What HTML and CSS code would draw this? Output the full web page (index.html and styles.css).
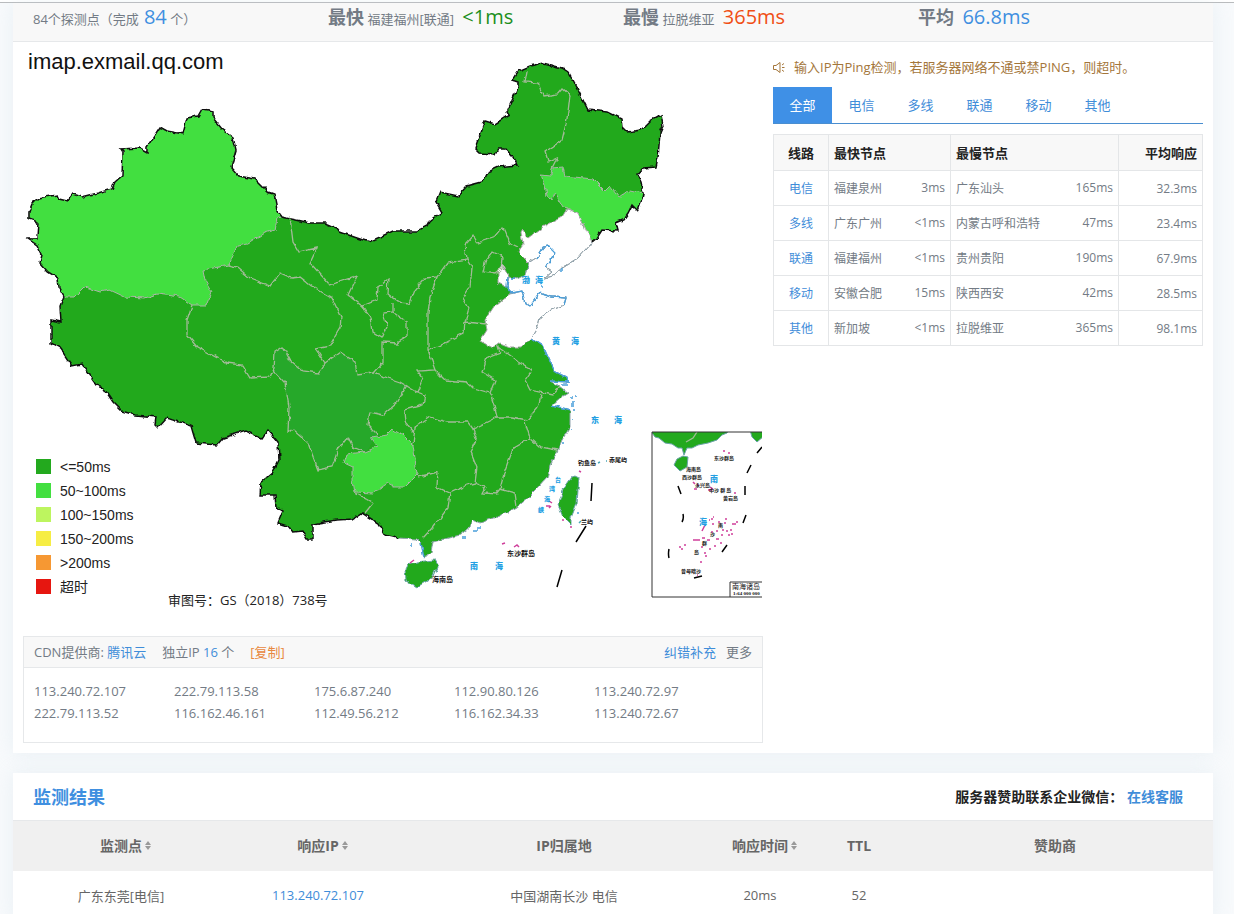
FILE: index.html
```
<!DOCTYPE html>
<html lang="zh-CN">

<head>
    <meta charset="UTF-8">
    <meta name="viewport" content="width=device-width, initial-scale=1.0">
    <title>imap.exmail.qq.com Ping检测</title>
    <link rel="stylesheet" href="styles.css">
</head>

<body>
    <div class="topline"></div>

    <main class="page">
        <section class="card">
            <div class="stats">
                <div>84个探测点（完成<span class="num blue">84</span> 个）</div>
                <div><strong>最快</strong> 福建福州[联通] <span class="num green">&lt;1ms</span></div>
                <div><strong>最慢</strong> 拉脱维亚 <span class="num red">365ms</span></div>
                <div><strong>平均</strong> <span class="num blue">66.8ms</span></div>
            </div>

            <div class="overview">
                <div class="left">
                    <svg class="map" viewBox="23 42 740 594" role="img" aria-label="中国响应时间地图">
                        <defs>
                            <filter id="rough" x="-5%" y="-5%" width="110%" height="110%">
                                <feTurbulence type="fractalNoise" baseFrequency="0.14" numOctaves="2" seed="4" />
                                <feDisplacementMap in="SourceGraphic" scale="5" xChannelSelector="R" yChannelSelector="G" />
                            </filter>
                            <clipPath id="insetClip"><rect x="652" y="432" width="110" height="165" /></clipPath>
                        </defs>

                        <g filter="url(#rough)">
                            <!-- 全国 -->
                            <path class="land" d="M64 297L59 288 58 278 48 272 40 263 42 255 37 245 28 239 37 239 38 222 29 219 29 212 32 204 38 198 57 195 59 199 67 201 72 194 82 197 98 193 112 189 115 182 122 176 123 152 121 149 140 148 147 152 147 147 160 127 167 131 183 134 187 118 198 116 202 109 213 111 213 118 222 129 233 137 236 150 231 168 238 176 255 179 268 192 274 194 277 210 282 217 310 223 325 223 337 228 340 232 357 238 369 242 393 231 417 231 427 226 430 220 442 212 436 202 440 192 458 196 467 186 482 182 487 172 498 167 518 165 513 157 505 148 498 148 495 154 480 153 475 148 485 121 495 124 509 115 507 112 518 87 518 82 512 80 518 71 530 66 543 63 562 68 568 72 578 90 588 110 608 112 622 119 623 128 627 132 641 130 650 121 661 115 663 126 660 133 658 157 656 167 643 168 637 175 641 183 643 193 641 203 638 211 632 205 628 213 623 220 615 223 617 231 602 230 597 238 592 242 587 232 578 213 567 209 562 217 543 227 528 238 523 229 521 232 523 245 518 252 529 263 525 275 517 279 508 277 507 287 512 293 531 338 543 346 548 357 555 372 567 378 568 382 550 381 560 387 568 393 560 398 552 405 570 410 570 427 562 440 557 452 550 465 547 478 538 488 528 498 517 507 500 516 480 523 473 520 470 527 460 535 433 542 431 553 424 557 421 543 417 539 397 538 385 535 378 523 362 513 353 519 337 520 318 523 313 524 313 539 307 539 303 532 293 533 287 526 278 523 283 511 276 507 275 495 259 495 260 483 273 472 279 460 278 442 268 430 262 439 245 431 223 438 217 445 196 443 191 426 167 418 158 428 155 425 156 417 135 415 122 411 113 402 103 387 97 385 82 364 72 366 60 348 51 343 51 320 61 322 60 307Z" />
                            <!-- 四川 -->
                            <path class="sichuan" d="M273 370L275 352 283 347 290 360 303 371 318 373 325 363 340 352 355 362 357 375 373 373 400 382 407 385 397 403 383 415 370 412 368 425 378 435 365 452 353 447 348 437 338 450 332 467 318 470 308 443 293 430 288 433 289 407 285 383Z" />
                            <!-- 新疆 -->
                            <path class="light" d="M64 297L59 288 58 278 48 272 40 263 42 255 37 245 28 239 37 239 38 222 29 219 29 212 32 204 38 198 57 195 59 199 67 201 72 194 82 197 98 193 112 189 115 182 122 176 123 152 121 149 140 148 147 152 147 147 160 127 167 131 183 134 187 118 198 116 202 109 213 111 213 118 222 129 233 137 236 150 231 168 238 176 255 179 268 192 274 194 277 210 282 217 277 218 275 230 265 233 248 244 237 246 229 265 203 270 205 280 212 292 207 305 192 305 180 297 157 294 145 298 125 297 110 290 100 292 85 287 75 297Z" />
                            <!-- 吉林 -->
                            <path class="light" d="M541 175L551 176 552 168 563 167 565 176 593 179 605 191 610 186 619 198 630 190 643 193 641 203 638 211 632 205 628 213 623 220 615 223 617 231 602 230 597 238 592 242 587 232 578 213 567 208 563 207 555 193 552 199 547 196 545 185Z" />
                            <!-- 贵州 -->
                            <path class="light" d="M393 429L403 435 413 445 415 458 417 475 405 487 395 487 388 483 373 493 355 492 353 480 353 467 344 463 347 454 365 452 377 447 371 438 387 435Z" />
                            <!-- 辽宁 天津 山东 -->
                            <path class="blank" d="M567 209L578 213 587 232 592 242 578 258 563 267 553 276 545 278 552 272 546 268 555 252 550 247 543 248 537 258 529 263 518 252 523 245 521 232 523 229 528 238 543 227 562 217Z" />
                            <path class="blank" d="M502 263L505 270 509 277 507 287 498 283 498 272Z" />
                            <path class="blank" d="M510 294L522 291 525 303 530 306 540 293 552 297 566 298 564 305 550 311 540 318 538 326 531 338 520 347 510 347 500 343 493 348 480 341 487 330 485 320 495 305 503 298Z" />
                            <!-- 省界 -->
                            <g class="border">
                                <path d="M192 305L187 320 187 335 197 347 227 363 242 365 250 378 270 377 274 368 275 352 283 347 290 360 303 371 318 373 325 363 315 348 330 345 340 328 341 317 332 298 313 287 300 277 292 278 280 273 270 286 250 278 237 267 229 265" />
                                <path d="M273 370L285 383 289 407 288 433 293 430 308 443 318 470 332 467 338 450 348 437 353 447 365 452" />
                                <path d="M290 218L293 242 299 252 317 248 310 263 330 285 357 276 348 295 362 306 377 300 378 287 388 278 387 293 398 302 410 303 415 290 425 278 437 277 447 263 467 260 465 245 473 236 477 243 495 237 503 227 510 243 518 247" />
                                <path d="M362 306L370 317 372 332 382 338 387 327 383 313 393 312 393 303M393 312L407 322 407 337 397 343 383 342 383 362 373 373" />
                                <path d="M325 363L340 352 355 362 357 375 373 373 400 382 417 392 423 378 418 371 435 370 428 350 428 313 430 297 437 277" />
                                <path d="M467 260L472 268 470 287 463 298 469 308 465 322 464 333 447 342 428 350M465 322L487 324" />
                                <path d="M435 370L445 380 467 382 473 388 490 393 495 380 482 372 487 358 500 353 498 347 518 362 532 370 525 380 530 390 553 395 560 387" />
                                <path d="M541 394L538 407 527 420 512 417 497 417 494 405 490 393M497 417L473 429 468 422 447 422 430 417 415 427 413 445" />
                                <path d="M407 385L397 403 383 415 370 412 368 425 378 435M417 392L425 395 423 405 404 410 405 422 414 432" />
                                <path d="M473 429L477 440 471 452 477 467 475 483 467 485 450 493 437 487 438 472 417 477M475 483L485 487 482 493 496 494 500 489 505 470 513 448 530 438 525 422M530 438L540 447 557 450M500 489L515 493 517 507" />
                                <path d="M450 493L448 508 433 527 422 539M355 493L373 503 365 513" />
                                <path d="M527 71L525 82 538 83 543 96 557 94 562 88 570 95 567 120 562 140 545 152 548 162 557 158 552 168" />
                                <path d="M493 252L503 257 502 268 495 274 483 272 485 262Z" />
                            </g>
                            <!-- 国界 -->
                            <path class="frontier" d="M592 242L597 238 602 230 617 231 615 223 623 220 628 213 632 205 638 211 641 203 643 193 641 183 637 175 643 168 656 167 658 157 660 133 663 126 661 115 650 121 641 130 627 132 623 128 622 119 608 112 588 110 578 90 568 72 562 68 543 63 530 66 518 71 512 80 518 82 518 87 507 112 509 115 495 124 485 121 475 148 480 153 495 154 498 148 505 148 513 157 518 165 498 167 487 172 482 182 467 186 458 196 440 192 436 202 442 212 430 220 427 226 417 231 393 231 369 242 357 238 340 232 337 228 325 223 310 223 282 217 277 210 274 194 268 192 255 179 238 176 231 168 236 150 233 137 222 129 213 118 213 111 202 109 198 116 187 118 183 134 167 131 160 127 147 147 147 152 140 148 121 149 123 152 122 176 115 182 112 189 98 193 82 197 72 194 67 201 59 199 57 195 38 198 32 204 29 212 29 219 38 222 37 239 28 239 37 245 42 255 40 263 48 272 58 278 59 288 64 297 60 307 61 322 51 320 51 343 60 348 72 366 82 364 97 385 103 387 113 402 122 411 135 415 156 417 155 425 158 428 167 418 191 426 196 443 217 445 223 438 245 431 262 439 268 430 278 442 279 460 273 472 260 483 259 495 275 495 276 507 283 511 278 523 287 526 293 533 303 532 307 539 313 539 313 524 318 523 337 520 353 519 362 513 378 523 385 535 397 538" />
                            <!-- 海岸线 -->
                            <path class="coast" d="M592 242L578 258 563 267 553 276 545 278 552 272 546 268 555 252 550 247 543 248 537 258 529 263 525 275 517 279 508 277 507 287 512 293 522 291 525 303 530 306 540 293 552 297 566 298 564 305 550 311 540 318 538 326 531 338 543 346 548 357 555 372 567 378 568 382 550 381 560 387 568 393 560 398 552 405 570 410 570 427 562 440 557 452 550 465 547 478 538 488 528 498 517 507 500 516 480 523 473 520 470 527 460 535 433 542 431 553 424 557 421 543 417 539 397 538" />
                            <path class="shore" d="M546 268L555 252 550 247 543 248 537 258M508 277L507 287 512 293 522 291 525 303 530 306 540 293 552 297 566 298 564 305M531 338L543 346 548 357 555 372 567 378 568 382 550 381M552 405L570 410M424 557L421 543" />
                            <path class="land coast-edge" d="M408 564L417 562 435 560 438 565 432 578 417 587 406 580 405 570Z" />
                            <path class="land coast-edge" d="M575 476L579 478 577 503 571 518 571 525 563 517 558 505 563 490 572 477Z" />
                            <g class="isles">
                                <path d="M571 398h2M576 396h2M572 402h3M571 406h4M573 410h3M571 404h3M566 382h3M561 385h6M560 272h2M566 273h1M560 270h2M541 286h1M572 420h1M571 430h1M562 443h2M473 530h5M477 528h5M461 537h5M410 545h2M577 513h2M511 278h4" />
                            </g>
                        </g>

                        <g class="reef">
                            <path d="M549 501l3 2M546 506h4M549 508l2-2M579 471l2 1M502 544l3-1M514 547l3-2 2 2M562 520h2M570 527h2M410 563l4-3" />
                            <path class="teal" d="M598 463l2-1M606 461h1M579 523l2-2" />
                        </g>
                        <path class="dash" d="M592 483L591 501M586 526L576 542M562 570L557 587" />

                        <g class="sea">
                            <text x="522" y="283">渤</text><text x="535" y="283">海</text>
                            <text x="552" y="344">黄</text><text x="571" y="344">海</text>
                            <text x="591" y="423">东</text><text x="614" y="423">海</text>
                            <text x="470" y="569">南</text><text x="495" y="569">海</text>
                            <text class="strait" x="555" y="482">台</text>
                            <text class="strait" x="549" y="491">湾</text>
                            <text class="strait" x="544" y="501">海</text>
                            <text class="strait" x="538" y="512">峡</text>
                        </g>
                        <g class="place">
                            <text x="578" y="465">钓鱼岛</text>
                            <text x="609" y="462">赤尾屿</text>
                            <text x="581" y="524">兰屿</text>
                            <text class="big" x="507" y="556">东沙群岛</text>
                            <text class="big" x="432" y="582">海南岛</text>
                        </g>

                        <!-- 南海诸岛 -->
                        <g clip-path="url(#insetClip)">
                            <path class="land coast-edge" d="M650 430L655 437 659 438 665 443 672 444 678 448 682 448 684 455 687 448 692 448 698 445 708 443 717 440 722 435 727 433 729 430Z" />
                            <path class="land coast-edge" d="M750 430L752 437 757 442 764 436 764 430Z" />
                            <path class="land coast-edge" d="M677 459L683 456 688 457 687 467 680 471 674 465Z" />
                            <path class="border" d="M697 432L693 438 686 442" />
                            <path class="dash" d="M762 447L757 453M751 465L747 473M745 486V495M678 486L681 494M683 514Q684 519 682 522M746 515L743 523M727 545L722 552M669 549Q668 554 669 558M694 578L702 576" />
                            <path class="reef" d="M723 451h2M728 453h2M693 482l2 2M697 485h2M694 489h3M710 487l3 2M708 490h4M734 493h2M711 519h2M712 524h2M725 519h2M724 523h2M732 524h4M736 522h2M718 522h2M722 530h2M726 531h2M730 530h2M731 534h2M728 535h2M721 535h2M716 531h2M711 532h2M705 525l-3 6M693 540h7M702 538h3M707 540h3M716 539h3M720 543h2M714 546h2M709 549h2M705 556h2M701 547h2M679 547h2M684 545h2M681 549h2M700 562h2M704 553h2M697 575h1M713 517h1M709 520h1" />
                        </g>
                        <path class="frame" d="M762 432H652V597H762M730 597V582H762" />
                        <g class="sea">
                            <text x="710" y="482">南</text><text x="699" y="525">海</text>
                        </g>
                        <g class="place inset">
                            <text x="714" y="460">东沙群岛</text>
                            <text x="686" y="471">海南岛</text>
                            <text x="682" y="479">西沙群岛</text>
                            <text x="695" y="487">永兴岛</text>
                            <text x="709" y="492">中沙 群 岛</text>
                            <text x="723" y="500">黄岩岛</text>
                            <text x="718" y="527">南</text><text x="710" y="536">沙</text>
                            <text x="702" y="545">群</text><text x="694" y="554">岛</text>
                            <text x="681" y="573">曾母暗沙</text>
                            <text class="name" x="732" y="589">南海诸岛</text>
                            <text class="scale" x="733" y="595">1:64 000 000</text>
                        </g>

                        <text class="host" x="28" y="69">imap.exmail.qq.com</text>

                        <g class="legend">
                            <rect x="36" y="459" width="15" height="15" fill="#23a91e" /><text x="60" y="472">&lt;=50ms</text>
                            <rect x="36" y="483" width="15" height="15" fill="#43df40" /><text x="60" y="496">50~100ms</text>
                            <rect x="36" y="507" width="15" height="15" fill="#bdf55f" /><text x="60" y="520">100~150ms</text>
                            <rect x="36" y="531" width="15" height="15" fill="#f6ed44" /><text x="60" y="544">150~200ms</text>
                            <rect x="36" y="555" width="15" height="15" fill="#f69833" /><text x="60" y="568">&gt;200ms</text>
                            <rect x="36" y="579" width="15" height="15" fill="#e61610" /><text x="60" y="592">超时</text>
                        </g>
                        <text class="approval" x="168" y="605">审图号：GS（2018）738号</text>
                    </svg>

                    <div class="cdn">
                        <div class="cdn-head">
                            <span>CDN提供商: <a href="#">腾讯云</a></span>
                            <span class="count">独立IP <a href="#">16</a> 个</span>
                            <button type="button" class="copy">[复制]</button>
                            <a href="#" class="fix">纠错补充</a>
                            <a href="#" class="more">更多</a>
                        </div>
                        <ul class="ips">
                            <li>113.240.72.107</li>
                            <li>222.79.113.58</li>
                            <li>175.6.87.240</li>
                            <li>112.90.80.126</li>
                            <li>113.240.72.97</li>
                            <li>222.79.113.52</li>
                            <li>116.162.46.161</li>
                            <li>112.49.56.212</li>
                            <li>116.162.34.33</li>
                            <li>113.240.72.67</li>
                        </ul>
                    </div>
                </div>

                <div class="right">
                    <p class="notice">
                        <svg width="13" height="13" viewBox="0 0 13 13" aria-hidden="true">
                            <path d="M0.5 4.5H3L7 1.5V11.5L3 8.5H0.5ZM9 6.5H11.5M9 4L11 2.5M9 9L11 10.5" />
                        </svg>
                        输入IP为Ping检测，若服务器网络不通或禁PING，则超时。
                    </p>
                    <div class="tabs">
                        <button type="button" class="active">全部</button>
                        <button type="button">电信</button>
                        <button type="button">多线</button>
                        <button type="button">联通</button>
                        <button type="button">移动</button>
                        <button type="button">其他</button>
                    </div>
                    <table class="lines">
                        <thead>
                            <tr><th class="c-line">线路</th><th class="c-fast">最快节点</th><th class="c-slow">最慢节点</th><th class="c-avg">平均响应</th></tr>
                        </thead>
                        <tbody>
                            <tr>
                                <td><a href="#">电信</a></td>
                                <td><div class="node"><span>福建泉州</span><span>3ms</span></div></td>
                                <td><div class="node"><span>广东汕头</span><span>165ms</span></div></td>
                                <td>32.3ms</td>
                            </tr>
                            <tr>
                                <td><a href="#">多线</a></td>
                                <td><div class="node"><span>广东广州</span><span>&lt;1ms</span></div></td>
                                <td><div class="node"><span>内蒙古呼和浩特</span><span>47ms</span></div></td>
                                <td>23.4ms</td>
                            </tr>
                            <tr>
                                <td><a href="#">联通</a></td>
                                <td><div class="node"><span>福建福州</span><span>&lt;1ms</span></div></td>
                                <td><div class="node"><span>贵州贵阳</span><span>190ms</span></div></td>
                                <td>67.9ms</td>
                            </tr>
                            <tr>
                                <td><a href="#">移动</a></td>
                                <td><div class="node"><span>安徽合肥</span><span>15ms</span></div></td>
                                <td><div class="node"><span>陕西西安</span><span>42ms</span></div></td>
                                <td>28.5ms</td>
                            </tr>
                            <tr>
                                <td><a href="#">其他</a></td>
                                <td><div class="node"><span>新加坡</span><span>&lt;1ms</span></div></td>
                                <td><div class="node"><span>拉脱维亚</span><span>365ms</span></div></td>
                                <td>98.1ms</td>
                            </tr>
                        </tbody>
                    </table>
                </div>
            </div>
        </section>

        <section class="card">
            <div class="result-head">
                <h2>监测结果</h2>
                <p>服务器赞助联系企业微信： <a href="#">在线客服</a></p>
            </div>
            <table class="result">
                <thead>
                    <tr>
                        <th class="r-point"><button type="button" class="sort">监测点</button></th>
                        <th class="r-ip"><button type="button" class="sort">响应IP</button></th>
                        <th class="r-place">IP归属地</th>
                        <th class="r-time"><button type="button" class="sort">响应时间</button></th>
                        <th class="r-ttl">TTL</th>
                        <th>赞助商</th>
                    </tr>
                </thead>
                <tbody>
                    <tr>
                        <td class="r-point">广东东莞[电信]</td>
                        <td><a href="#">113.240.72.107</a></td>
                        <td>中国湖南长沙 电信</td>
                        <td>20ms</td>
                        <td>52</td>
                        <td></td>
                    </tr>
                </tbody>
            </table>
        </section>
    </main>
</body>

</html>
```
FILE: styles.css
```
* {
    box-sizing: border-box;
}

body {
    margin: 0;
    height: 100vh;
    overflow: hidden;
    background: #f8fafc;
    color: #737b85;
    font-family: "Open Sans", "Noto Sans CJK SC", sans-serif;
    font-size: 13px;
}

a {
    color: #3f8dd9;
    text-decoration: none;
}

button {
    font: inherit;
    color: inherit;
    background: none;
    border: 0;
    padding: 0;
    cursor: pointer;
}

.topline {
    height: 3px;
    background: #fff;
    border-bottom: 1px solid #b9bbbd;
}

.page {
    padding: 0 21px 0 13px;
}

.card {
    background: #fff;
    margin-bottom: 20px;
    box-shadow: 0 0 20px rgba(200, 220, 230, 0.3);
}

/* 顶部统计 */
.stats {
    display: grid;
    grid-template-columns: repeat(4, 1fr);
    padding: 0 0 10px 20px;
    line-height: 28px;
    background: #f8f8f8;
    border-bottom: 1px solid #e6e8ea;
}

.stats > div {
    height: 28px;
    white-space: nowrap;
}

.stats strong {
    font-size: 18px;
}

.num {
    font-size: 20px;
    margin-left: 5px;
}

.blue {
    color: #3f8fe0;
}

.green {
    color: #1c8f1c;
}

.red {
    color: #f04e14;
}

.overview {
    display: grid;
    grid-template-columns: 740fr 430fr;
    gap: 10px;
    padding: 0 10px 10px;
}

/* 地图 */
.map {
    display: block;
    width: 100%;
}

.land {
    fill: #23a91e;
}

.sichuan {
    fill: #28a82a;
}

.light {
    fill: #43df40;
    stroke: #a9b5a5;
    stroke-width: 1;
}

.blank {
    fill: #fff;
    stroke: #a5a5a5;
    stroke-width: 1;
}

.border {
    fill: none;
    stroke: #a3bb98;
    stroke-width: 1.3;
}

.frontier {
    fill: none;
    stroke: #111;
    stroke-width: 1.5;
}

.coast {
    fill: none;
    stroke: #8fa3ad;
    stroke-width: 1;
}

.coast-edge {
    stroke: #6ba3a8;
    stroke-width: 1;
}

.shore,
.isles {
    fill: none;
    stroke: #4b9fda;
    stroke-width: 1.3;
}

.reef {
    fill: none;
    stroke: #cf3f9b;
    stroke-width: 1.5;
}

.teal {
    stroke: #4aa6b8;
}

.dash {
    fill: none;
    stroke: #000;
    stroke-width: 1.5;
}

.frame {
    fill: none;
    stroke: #333;
    stroke-width: 1;
}

.sea {
    fill: #239fe3;
    font-family: "Noto Sans CJK SC", sans-serif;
    font-size: 8px;
    font-weight: 900;
}

.strait {
    font-size: 6px;
}

.place {
    fill: #111;
    font-family: "Noto Sans CJK SC", sans-serif;
    font-size: 6px;
    font-weight: bold;
}

.place .big {
    font-size: 7px;
}

.inset {
    font-size: 5px;
}

.place .name {
    font-size: 7px;
    font-weight: normal;
}

.place .scale {
    font-family: "Liberation Serif", serif;
    font-size: 5px;
}

.host {
    fill: #111;
    font-family: "Liberation Sans", Arial, sans-serif;
    font-size: 22px;
}

.legend {
    font-family: "Liberation Sans", "Noto Sans CJK SC", sans-serif;
    font-size: 14px;
}

.legend text,
.approval {
    fill: #222;
}

/* CDN */
.cdn {
    border: 1px solid #e6e8ea;
}

.cdn-head {
    display: flex;
    align-items: center;
    height: 31px;
    padding: 0 10px 2px;
    background: #f8f8f8;
    border-bottom: 1px solid #e6e8ea;
}

.count,
.copy {
    margin-left: 16px;
}

.copy {
    color: #e8883f;
}

.fix {
    margin-left: auto;
}

.more {
    margin-left: 10px;
    color: #737b85;
}

.ips {
    display: grid;
    grid-template-columns: repeat(5, 140px);
    margin: 0;
    padding: 12px 10px 18px;
    list-style: none;
    line-height: 22px;
}

/* 线路 */
.notice {
    display: flex;
    align-items: center;
    gap: 8px;
    margin: 15px 0 10px;
    line-height: 20px;
    color: #a4763a;
    white-space: nowrap;
}

.notice path {
    fill: none;
    stroke: #a4763a;
}

.tabs {
    display: flex;
    height: 37px;
    border-bottom: 1px solid #4a8ed0;
}

.tabs button {
    width: 59px;
    padding-bottom: 2px;
    color: #3f8dd9;
}

.tabs .active {
    background: #3f90e6;
    color: #fff;
}

.lines {
    width: 100%;
    margin-top: 10px;
    border-collapse: collapse;
    table-layout: fixed;
    font-size: 12px;
}

.lines th,
.lines td {
    height: 35px;
    padding: 0 5px;
    border: 1px solid #e4e6e8;
    text-align: left;
}

.lines th {
    height: 36px;
    background: #f8f8f8;
    color: #222;
    font-size: 13px;
}

.lines th:first-child,
.lines td:first-child {
    text-align: center;
}

.lines th:last-child,
.lines td:last-child {
    text-align: right;
}

.c-line {
    width: 55px;
}

.c-fast {
    width: 122px;
}

.c-slow {
    width: 168px;
}

.node {
    display: flex;
    justify-content: space-between;
}

/* 监测结果 */
.result-head {
    display: flex;
    align-items: center;
    justify-content: space-between;
    height: 48px;
    padding: 0 30px 2px 20px;
    border-bottom: 1px solid #e6e8ea;
}

.result-head h2 {
    margin: 0;
    color: #3f8fe0;
    font-size: 18px;
}

.result-head p {
    margin: 0;
    color: #222;
    font-size: 14px;
    font-weight: bold;
}

.result {
    width: 100%;
    border-collapse: collapse;
    table-layout: fixed;
    text-align: center;
    color: #666;
}

.result th,
.result td {
    height: 50px;
    padding: 0 0 2px;
}

.result th {
    background: #f0f0f0;
    font-size: 14px;
}

.result .r-point {
    width: 194px;
    padding-left: 22px;
}

.r-ip {
    width: 222px;
}

.r-place {
    width: 270px;
}

.r-time {
    width: 122px;
}

.r-ttl {
    width: 76px;
}

.sort {
    position: relative;
}

.sort::before,
.sort::after {
    content: "";
    position: absolute;
    left: calc(100% + 3px);
    border: 3px solid transparent;
}

.sort::before {
    bottom: 52%;
    border-top: 0;
    border-bottom: 4px solid #999;
}

.sort::after {
    top: 54%;
    border-bottom: 0;
    border-top: 4px solid #999;
}
```
